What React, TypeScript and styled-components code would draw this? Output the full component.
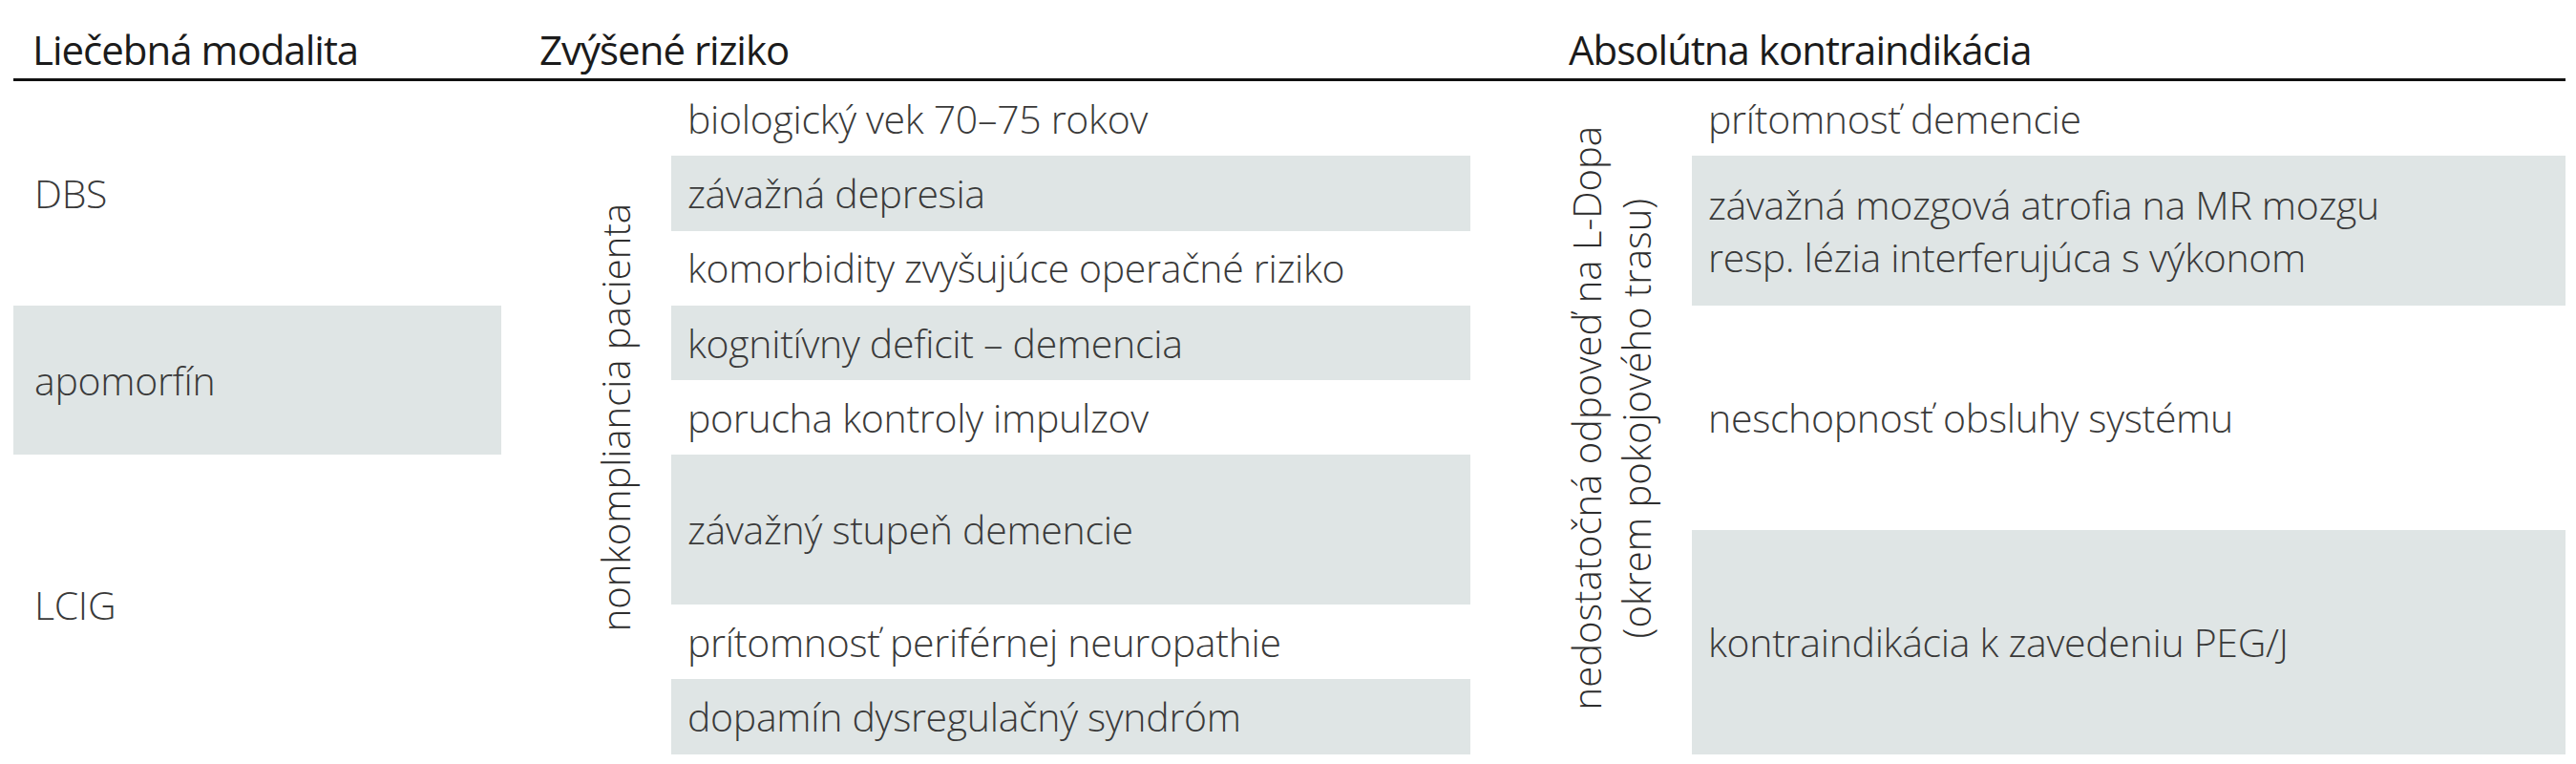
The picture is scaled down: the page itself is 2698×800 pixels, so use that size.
import React from "react";
import styled, { createGlobalStyle } from "styled-components";

const GlobalStyle = createGlobalStyle`
  html, body {
    margin: 0;
    padding: 0;
    background: #ffffff;
  }
  body {
    font-family: "Open Sans", "Noto Sans", "Liberation Sans", sans-serif;
  }
`;

type Cell = {
  text: React.ReactNode;
  from: number;
  to: number;
  shaded?: boolean;
};

const modalities: Cell[] = [
  { text: "DBS", from: 1, to: 4 },
  { text: "apomorfín", from: 4, to: 6, shaded: true },
  { text: "LCIG", from: 6, to: 10 },
];

const risks: Cell[] = [
  { text: "biologický vek 70–75 rokov", from: 1, to: 2 },
  { text: "závažná depresia", from: 2, to: 3, shaded: true },
  { text: "komorbidity zvyšujúce operačné riziko", from: 3, to: 4 },
  { text: "kognitívny deficit – demencia", from: 4, to: 5, shaded: true },
  { text: "porucha kontroly impulzov", from: 5, to: 6 },
  { text: "závažný stupeň demencie", from: 6, to: 8, shaded: true },
  { text: "prítomnosť periférnej neuropathie", from: 8, to: 9 },
  { text: "dopamín dysregulačný syndróm", from: 9, to: 10, shaded: true },
];

const contraindications: Cell[] = [
  { text: "prítomnosť demencie", from: 1, to: 2 },
  {
    text: (
      <>
        závažná mozgová atrofia na MR mozgu
        <br />
        resp. lézia interferujúca s výkonom
      </>
    ),
    from: 2,
    to: 4,
    shaded: true,
  },
  { text: "neschopnosť obsluhy systému", from: 4, to: 7 },
  { text: "kontraindikácia k zavedeniu PEG/J", from: 7, to: 10, shaded: true },
];

export default function App() {
  return (
    <>
      <GlobalStyle />
      <Page>
        <Header>
          <HeadCell $pad={20}>Liečebná modalita</HeadCell>
          <HeadCell $pad={20}>Zvýšené riziko</HeadCell>
          <HeadCell $pad={28}>Absolútna kontraindikácia</HeadCell>
        </Header>
        <Body>
          {modalities.map((c, i) => (
            <DataCell key={"m" + i} $col={1} $from={c.from} $to={c.to} $shaded={c.shaded}>
              {c.text}
            </DataCell>
          ))}
          <SideLabel $col={2} $right={32}>
            <span>nonkompliancia pacienta</span>
          </SideLabel>
          {risks.map((c, i) => (
            <DataCell key={"r" + i} $col={3} $from={c.from} $to={c.to} $shaded={c.shaded}>
              {c.text}
            </DataCell>
          ))}
          <SideLabel $col={4} $right={32}>
            <span>
              nedostatočná odpoveď na L-Dopa
              <br />
              (okrem pokojového trasu)
            </span>
          </SideLabel>
          {contraindications.map((c, i) => (
            <DataCell key={"c" + i} $col={5} $from={c.from} $to={c.to} $shaded={c.shaded}>
              {c.text}
            </DataCell>
          ))}
        </Body>
      </Page>
    </>
  );
}

const Page = styled.div`
  width: 2673px;
  padding-left: 14px;
`;

const Header = styled.div`
  display: grid;
  grid-template-columns: 531px 1070px 1072px;
  height: 85px;
  border-bottom: 3px solid #111111;
  box-sizing: border-box;
`;

const HeadCell = styled.div<{ $pad: number }>`
  display: flex;
  align-items: flex-end;
  padding: 0 0 2px ${(p) => p.$pad}px;
  font-size: 42px;
  font-weight: 400;
  color: #1b1b1b;
  letter-spacing: -1px;
  white-space: nowrap;
`;

const Body = styled.div`
  display: grid;
  grid-template-columns: 511px 178px 837px 232px 915px;
  grid-template-rows: repeat(9, 78.3px);
`;

const DataCell = styled.div<{ $col: number; $from: number; $to: number; $shaded?: boolean }>`
  grid-column: ${(p) => p.$col};
  grid-row: ${(p) => p.$from} / ${(p) => p.$to};
  display: flex;
  align-items: center;
  padding-left: ${(p) => (p.$col === 1 ? 22 : 17)}px;
  background: ${(p) => (p.$shaded ? "#dfe5e5" : "transparent")};
  font-size: 41px;
  font-weight: 300;
  line-height: 55px;
  color: #3a3a3a;
  letter-spacing: -0.3px;
  white-space: nowrap;
`;

const SideLabel = styled.div<{ $col: number; $right: number }>`
  grid-column: ${(p) => p.$col};
  grid-row: 1 / 10;
  display: flex;
  align-items: center;
  justify-content: flex-end;
  padding-right: ${(p) => p.$right}px;

  span {
    writing-mode: vertical-rl;
    transform: rotate(180deg);
    text-align: center;
    font-size: 40px;
    font-weight: 300;
    line-height: 52px;
    color: #2e2e2e;
    white-space: nowrap;
  }
`;
